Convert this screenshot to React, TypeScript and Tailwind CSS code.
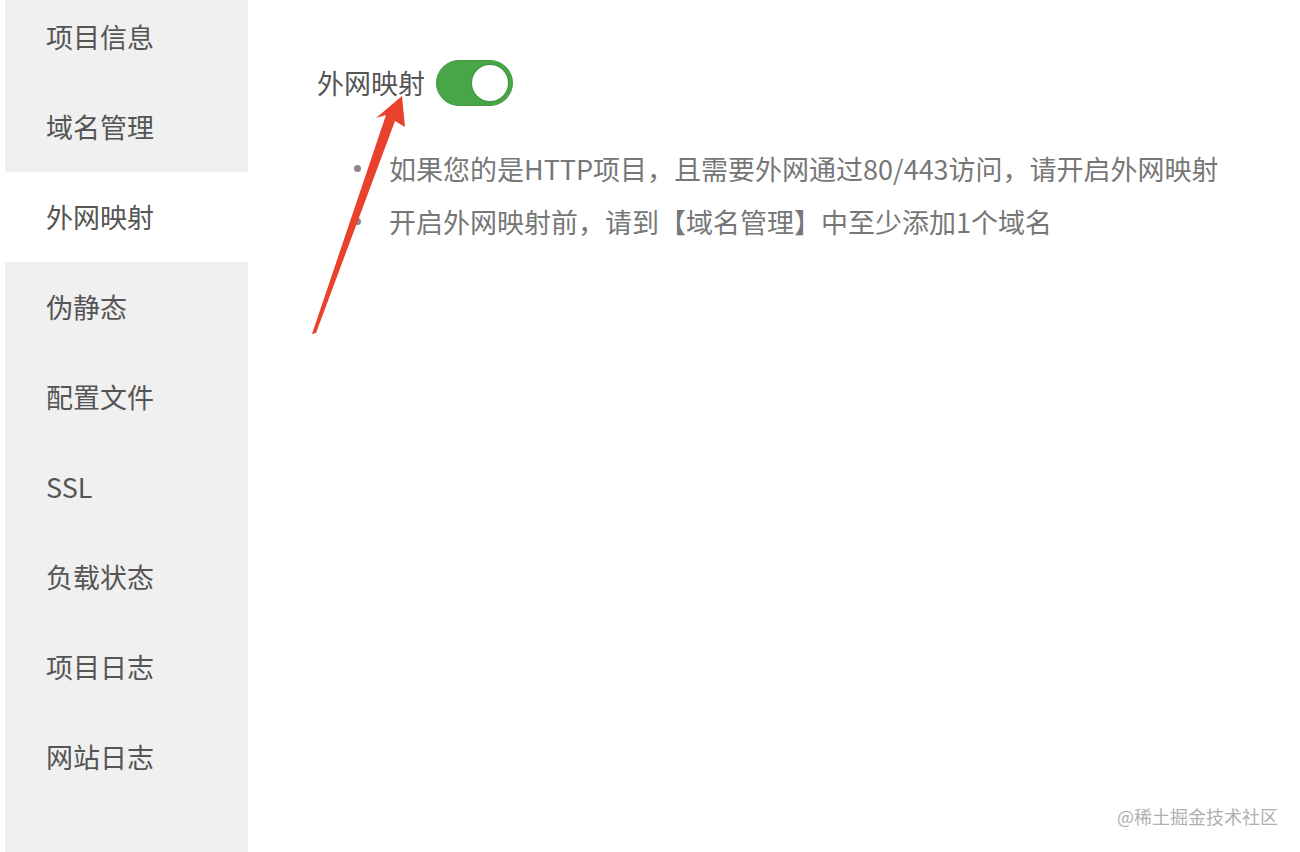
import React from "react";

const items = ["项目信息", "域名管理", "外网映射", "伪静态", "配置文件", "SSL", "负载状态", "项目日志", "网站日志"];

export default function App() {
  const font = { fontFamily: '"Noto Sans CJK SC", "Noto Sans", sans-serif' };
  return (
    <div className="relative w-[1300px] h-[852px] overflow-hidden bg-white flex items-start" style={font}>
      <div className="ml-[5px] w-[243px] h-[880px] shrink-0 bg-[#f0f0f0] flex flex-col -mt-[8px]">
        {items.map((t, i) => (
          <div
            key={t}
            className={`h-[90px] shrink-0 flex items-center pl-[41px] text-[27px] text-[#555] ${i === 2 ? "bg-white" : ""}`}
          >
            {t}
          </div>
        ))}
      </div>
      <div className="flex-1 pl-[69px] pt-[60px] flex flex-col">
        <div className="flex items-center h-[46px]">
          <span className="text-[27px] text-[#555] mr-[11px]">外网映射</span>
          <div className="w-[77px] h-[46px] rounded-full bg-[#48a548] border border-[#3f9a40] relative">
            <div className="absolute right-[4px] top-[4px] w-[36px] h-[36px] rounded-full bg-white shadow-[0_0_2px_rgba(0,0,0,0.35)]" />
          </div>
        </div>
        <ul className="mt-[36px] pl-[37px] text-[27px] text-[#777] leading-[53px]">
          {["如果您的是HTTP项目，且需要外网通过80/443访问，请开启外网映射", "开启外网映射前，请到【域名管理】中至少添加1个域名"].map((t) => (
            <li key={t} className="flex items-center">
              <span className="w-[7px] h-[7px] rounded-full bg-[#888] mr-[28px] shrink-0" />
              <span>{t}</span>
            </li>
          ))}
        </ul>
      </div>
      <svg className="absolute left-0 top-0 pointer-events-none" width="1300" height="852">
        <polygon
          points="402,96 376,118 386,115 312,334 316,333 395,121 405,127"
          fill="#e9412c"
        />
      </svg>
      <div className="absolute right-[22px] bottom-[22px] text-[18px] text-[#b0b0b0]">@稀土掘金技术社区</div>
    </div>
  );
}
